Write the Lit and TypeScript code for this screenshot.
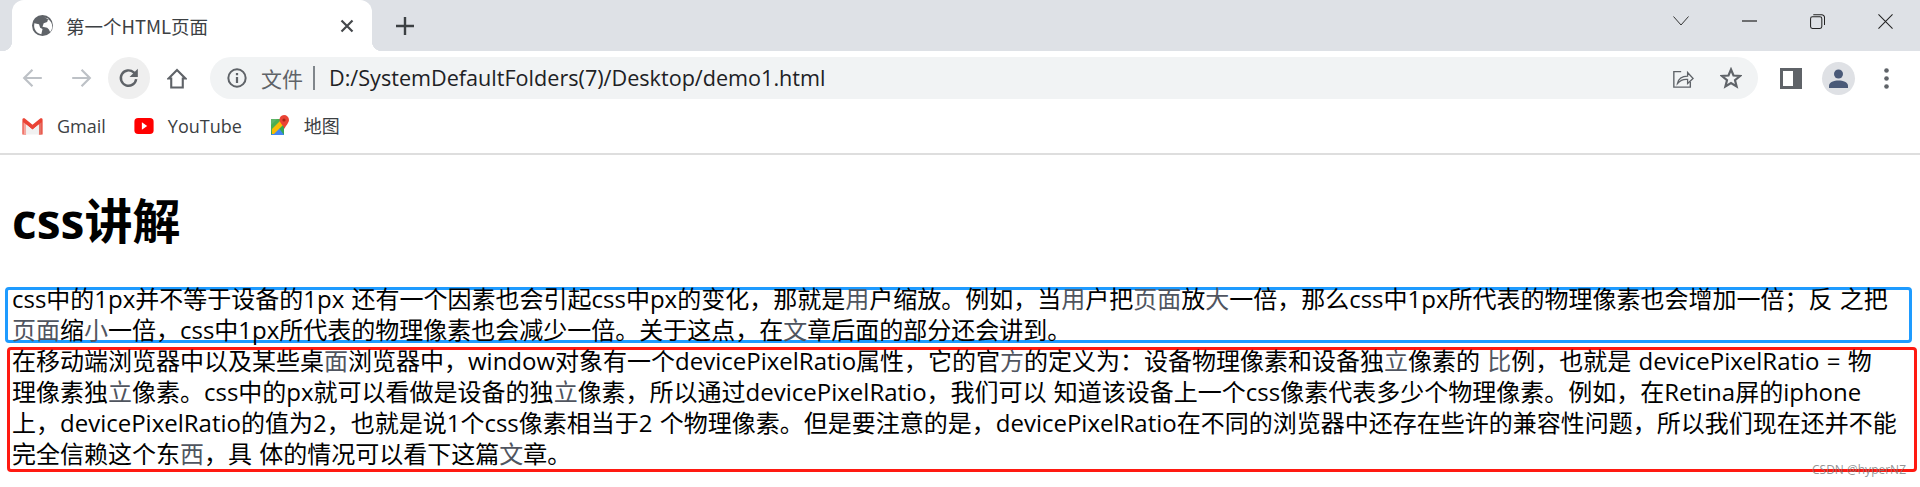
import { LitElement, html, css } from "lit";
import { customElement } from "lit/decorators.js";

const L = (s: string) => html`<span class="l">${s}</span>`;

@customElement("app-root")
export class AppRoot extends LitElement {
  static styles = css`
    :host { display: block; width: 1920px; height: 487px; overflow: hidden; position: relative; background: #fff;
      font-family: "Open Sans", "Noto Sans CJK SC", sans-serif; color: #000; }
    svg { display: block; flex: none; }
    .strip { height: 51px; background: #dee1e6; display: flex; align-items: stretch; padding-left: 12px; }
    .tab { width: 360px; background: #fff; border-radius: 12px 12px 0 0; display: flex; align-items: center; padding: 0 18px 0 20px; box-sizing: border-box; position: relative; }
    .tab::before, .tab::after { content: ""; position: absolute; bottom: 0; width: 10px; height: 10px; }
    .tab::before { left: -10px; background: radial-gradient(circle at 0 0, #dee1e6 10px, #fff 10.5px); }
    .tab::after { right: -10px; background: radial-gradient(circle at 100% 0, #dee1e6 10px, #fff 10.5px); }
    .title { margin-left: 13px; font: 18.5px/24px "Noto Sans CJK SC", sans-serif; color: #3c4043; flex: 1; }
    .plus { margin: 0 0 0 24px; align-self: center; }
    .winctl { margin-left: auto; display: flex; align-items: center; gap: 53px; padding-right: 27px; height: 42px; }
    .toolbar { height: 54px; display: flex; align-items: center; padding-left: 22px; box-sizing: border-box; }
    .back { margin-left: 26px; }
    .reload { width: 42px; height: 42px; border-radius: 50%; background: #efefef; display: flex; align-items: center; justify-content: center; margin-left: 16px; }
    .home { margin-left: 17px; }
    .omni { margin-left: 23px; width: 1548px; height: 42px; border-radius: 21px; background: #f1f3f4; display: flex; align-items: center; padding: 0 16px 0 17px; box-sizing: border-box; }
    .file { margin-left: 14px; font: 21px/28px "Noto Sans CJK SC", sans-serif; color: #5f6368; }
    .sep { width: 2px; height: 24px; background: #80868b; margin: 0 14px 0 10px; }
    .url { font: 21.6px/28px "Open Sans", sans-serif; color: #202124; flex: 1; white-space: nowrap; }
    .star { margin-left: 26px; }
    .panel { margin-left: 22px; }
    .avatar { margin-left: 20px; width: 33px; height: 33px; border-radius: 50%; background: #dfe1e5; display: flex; align-items: center; justify-content: center; }
    .dots { margin-left: 29px; }
    .bm { height: 50px; display: flex; align-items: center; padding: 0 0 6px 21px; box-sizing: border-box; border-bottom: 2px solid #dedede; font: 18px/22px "Open Sans", "Noto Sans CJK SC", sans-serif; color: #3c4043; }
    .bmi { display: flex; align-items: center; gap: 13px; margin-right: 27px; }
    h1 { margin: 0; padding: 34px 0 0 12px; font: 700 48px/64px "Open Sans", "Noto Sans CJK SC", sans-serif; height: 132px; box-sizing: border-box; }
    .box { font: 400 24px/31px "Open Sans", "Noto Sans CJK SC", sans-serif; white-space: nowrap; box-sizing: border-box; border-radius: 4px; word-spacing: 1px; }
    .blue { border: 3px solid #1e9bff; margin: 0 8px 0 5px; height: 56px; padding-left: 4px; }
    .blue .txt { margin-top: -7px; }
    .red { border: 3px solid #ff1a12; margin: 4px 3px 0 7px; height: 125px; padding-left: 2px; }
    .red .txt { margin-top: -5px; }
    .l { color: #50555f; }
    .mark { position: absolute; left: 1812px; top: 461px; font: 12px/18px "Open Sans", sans-serif; color: rgba(120,120,120,.8); white-space: nowrap; }
  `;

  render() {
    return html`
      <div class="strip">
        <div class="tab">
          <svg width="21" height="21" viewBox="0 0 18 18"><circle cx="9" cy="9" r="9" fill="#5f6368"/><path fill="#fff" d="M2 7l4 1 1 3 2 1-1 4.500C4.500 16 2 13 1.800 9.500ZM10 2l4 1-1 3-3 1-1 3 4 1 1.500 1.500 1 2c2-2 2.500-5 1-8-1-2-4-4-6.500-4.500Z"/></svg>
          <span class="title">第一个HTML页面</span>
          <svg width="14" height="14" viewBox="0 0 14 14"><path d="M1.500 1.500l11 11m0-11l-11 11" stroke="#45484c" stroke-width="2.200"/></svg>
        </div>
        <svg class="plus" width="18" height="18" viewBox="0 0 18 18"><path d="M9 0v18M0 9h18" stroke="#3c4043" stroke-width="2.400"/></svg>
        <div class="winctl">
          <svg width="16" height="10" viewBox="0 0 16 10"><path d="M.5 .5L8 9l7.500-8.500" stroke="#333" fill="none"/></svg>
          <svg width="15" height="2" viewBox="0 0 15 2"><path d="M0 1h15" stroke="#222" stroke-width="1.200"/></svg>
          <svg width="15" height="15" viewBox="0 0 16 16" fill="none" stroke="#222" stroke-width="1.100"><rect x=".6" y="3" width="12" height="12.400" rx="2"/><path d="M3.500 .8h9a3 3 0 0 1 3 3v8"/></svg>
          <svg width="15" height="15" viewBox="0 0 16 16"><path d="M.5 .5l15 15m0-15l-15 15" stroke="#222" stroke-width="1.100"/></svg>
        </div>
      </div>
      <div class="toolbar">
        <svg width="22" height="20" viewBox="0 0 20 18" fill="none" stroke="#bdc1c6" stroke-width="2"><path d="M18 9H2M9.500 1.500L2 9l7.500 7.500"/></svg>
        <svg class="back" width="22" height="20" viewBox="0 0 20 18" fill="none" stroke="#bdc1c6" stroke-width="2"><path d="M2 9h16M10.500 1.500L18 9l-7.500 7.500"/></svg>
        <div class="reload"><svg width="22" height="22" viewBox="0 0 20 20" fill="none"><path d="M16.500 11a7 7 0 1 1-2.200-6.100L16 6.500" stroke="#5f6368" stroke-width="2.200"/><path d="M18 1.500V9h-7.500z" fill="#5f6368"/></svg></div>
        <svg class="home" width="20" height="21" viewBox="0 0 18 20" fill="none" stroke="#5f6368" stroke-width="2"><path d="M1 10l8-8 8 8h-2.500v8.500h-11V10z"/></svg>
        <div class="omni">
          <svg width="20" height="20" viewBox="0 0 18 18" fill="none"><circle cx="9" cy="9" r="7.800" stroke="#5f6368" stroke-width="1.800"/><path d="M9 8v5.500M9 4.500v2" stroke="#5f6368" stroke-width="2"/></svg>
          <span class="file">文件</span><span class="sep"></span>
          <span class="url">D:/SystemDefaultFolders(7)/Desktop/demo1.html</span>
          <svg width="22" height="22" viewBox="0 0 24 24" fill="none" stroke="#5f6368" stroke-width="1.500"><path d="M10 5H2v17h18v-6"/><path d="M6 18c1-5 5-8 11-8V6l6 6.500-6 5.500v-4.500c-4-.5-8 1-11 4.500z" stroke-width="1.400"/></svg>
          <svg class="star" width="22" height="22" viewBox="0 0 22 22" fill="none" stroke="#5f6368" stroke-width="2.200"><path d="M11 2.500l2.500 6 6.500.5-5 4.200 1.600 6.300-5.600-3.400-5.600 3.400 1.600-6.300-5-4.200 6.500-.5z"/></svg>
        </div>
        <svg class="panel" width="22" height="21" viewBox="0 0 22 21"><path fill-rule="evenodd" fill="#5f6368" d="M0 0h22v21H0zM3 3v15h10V3z"/></svg>
        <div class="avatar"><svg width="19" height="19" viewBox="0 0 19 19" fill="#4a5a78"><circle cx="9.500" cy="5" r="4.500"/><path d="M0 19v-2c0-4 5-5.500 9.500-5.500S19 13 19 17v2z"/></svg></div>
        <svg class="dots" width="5" height="21" viewBox="0 0 5 21" fill="#5f6368"><circle cx="2.500" cy="2.500" r="2.300"/><circle cx="2.500" cy="10.500" r="2.300"/><circle cx="2.500" cy="18.500" r="2.300"/></svg>
      </div>
      <div class="bm">
        <div class="bmi"><svg width="23" height="17" viewBox="0 0 19 16"><path d="M0 1.500C0 .5 1 0 2 .3l7.500 6L17 .3c1-.3 2 .2 2 1.200V15.500h-3.500V6L9.500 11 3.500 6v9.500H0z" fill="#ea4335"/><path d="M3.500 6v9.500H1V4z" fill="#f5a79f"/><path d="M15.500 6v9.500H18V4z" fill="#e57368"/><path d="M3.500 15.500h12V6l-6 5-6-5z" fill="#f1f1f1"/></svg><span>Gmail</span></div>
        <div class="bmi"><svg width="22" height="16" viewBox="0 0 18 15"><rect width="18" height="15" rx="3.500" fill="#f00"/><path d="M7 4l5 3.500-5 3.500z" fill="#fff"/></svg><span>YouTube</span></div>
        <div class="bmi"><svg width="22" height="22" viewBox="0 0 18 22"><path d="M0 4h13v16H0z" fill="#34a853"/><path d="M0 4l13 0-13 13z" fill="#4caf50"/><path d="M0 20l7-8 6 8z" fill="#4285f4"/><path d="M0 4h6L0 10z" fill="#5fb56a"/><path d="M1 14L11 4h2v5L3 19H1z" fill="#fbbc04"/><path d="M13 0a5 5 0 0 1 5 5c0 3-3 5-4.500 9-1-4-5-6-5-9a5 5 0 0 1 4.500-5z" fill="#ea4335"/><circle cx="13" cy="5" r="1.600" fill="#a52714"/></svg><span>地图</span></div>
      </div>
      <h1>css讲解</h1>
      <div class="box blue"><div class="txt">
        <div>css中的1px并不等于设备的1px 还有一个因素也会引起css中px的变化，那就是${L("用")}户缩放。例如，当${L("用")}户把${L("页面")}放${L("大")}一倍，那么css中1px所代表的物理像素也会增加一倍；反 之把</div>
        <div>${L("页面")}缩${L("小")}一倍，css中1px所代表的物理像素也会减少一倍。关于这点，在${L("文")}章后面的部分还会讲到。</div>
      </div></div>
      <div class="box red"><div class="txt">
        <div>在移动端浏览器中以及某些桌${L("面")}浏览器中，window对象有一个devicePixelRatio属性，它的官${L("方")}的定义为：设备物理像素和设备独${L("立")}像素的 ${L("比")}例，也就是 devicePixelRatio = 物</div>
        <div>理像素独${L("立")}像素。css中的px就可以看做是设备的独${L("立")}像素，所以通过devicePixelRatio，我们可以 知道该设备上一个css像素代表多少个物理像素。例如，在Retina屏的iphone</div>
        <div>上，devicePixelRatio的值为2，也就是说1个css像素相当于2 个物理像素。但是要注意的是，devicePixelRatio在不同的浏览器中还存在些许的兼容性问题，所以我们现在还并不能</div>
        <div>完全信赖这个东${L("西")}，具 体的情况可以看下这篇${L("文")}章。</div>
      </div></div>
      <div class="mark">CSDN @hyperNZ</div>
    `;
  }
}
